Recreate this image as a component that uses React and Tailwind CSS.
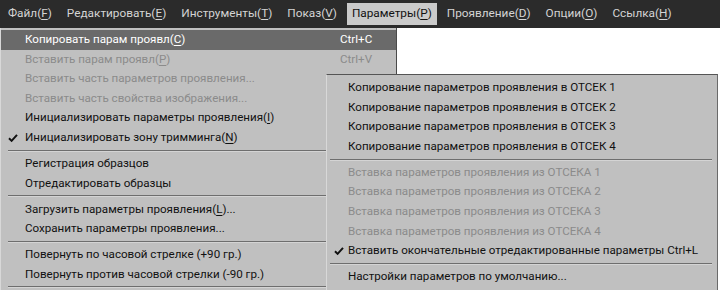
import React from 'react';

const font = { fontFamily: 'Roboto, "Noto Sans", sans-serif' };

function Mn({ children }) {
  return <span className="underline underline-offset-2">{children}</span>;
}

const topItems = [
  ['Файл(', 'F', ')'],
  ['Редактировать(', 'E', ')'],
  ['Инструменты(', 'T', ')'],
  ['Показ(', 'V', ')'],
  ['Параметры(', 'P', ')'],
  ['Проявление(', 'D', ')'],
  ['Опции(', 'O', ')'],
  ['Ссылка(', 'H', ')'],
];

function Check() {
  return (
    <svg width="10" height="9" viewBox="0 0 10 9" className="absolute left-[7px] top-1/2 -translate-y-1/2">
      <path d="M1 4.8 L3.6 7.4 L9 1.4" stroke="#111" strokeWidth="2" fill="none" />
    </svg>
  );
}

function Row({ children, shortcut, disabled, active, checked, pl = 'pl-[24px]' }) {
  let cls = 'text-[#111]';
  if (disabled) cls = 'text-[#8b8b8b]';
  if (active) cls = 'text-white bg-[#6a6a6a]';
  return (
    <div className={`relative flex items-center h-[19.6px] ${pl} pr-[20px] text-[11.6px] ${cls}`}>
      {checked && <Check />}
      <span className="flex-1 whitespace-nowrap">{children}</span>
      {shortcut && <span className="w-[36px] whitespace-nowrap">{shortcut}</span>}
    </div>
  );
}

function Sep({ w = 'w-[318px]', ml = 'ml-[7px]' }) {
  return (
    <div className="h-[6.4px] flex items-center">
      <div className={`${ml} ${w} h-[2px] border-t border-[#6e6e6e] border-b border-b-[#d4d4d4]`} />
    </div>
  );
}

export default function App() {
  return (
    <div className="w-[720px] h-[290px] bg-white overflow-hidden" style={font}>
      {/* menubar */}
      <div className="h-[28px] bg-[#2b2b2b] flex items-center pl-[3px] gap-[5px] text-[11.8px] text-[#d4d4d4]">
        {topItems.map(([a, m, b]) => {
          const sel = a === 'Параметры(';
          return (
            <div
              key={a}
              className={`h-[22px] flex items-center px-[5px] whitespace-nowrap ${sel ? 'bg-[#cacaca] text-[#111]' : ''}`}
            >
              {a}<Mn>{m}</Mn>{b}
            </div>
          );
        })}
      </div>

      <div className="relative">
        {/* main dropdown */}
        <div className="w-[397px] h-[262px] bg-[#c0c0c0] border-l border-l-[#d8d8d8] border-r border-r-[#4a4a4a] pt-[2px]">
          <Row active shortcut="Ctrl+C">Копировать парам проявл(<Mn>C</Mn>)</Row>
          <Row disabled shortcut="Ctrl+V">Вставить парам проявл(<Mn>P</Mn>)</Row>
          <Row disabled>Вставить часть параметров проявления...</Row>
          <Row disabled>Вставить часть свойства изображения...</Row>
          <Row>Инициализировать параметры проявления(<Mn>I</Mn>)</Row>
          <Row checked>Инициализировать зону тримминга(<Mn>N</Mn>)</Row>
          <Sep />
          <Row>Регистрация образцов</Row>
          <Row>Отредактировать образцы</Row>
          <Sep />
          <Row>Загрузить параметры проявления(<Mn>L</Mn>)...</Row>
          <Row>Сохранить параметры проявления...</Row>
          <Sep />
          <Row>Повернуть по часовой стрелке (+90 гр.)</Row>
          <Row>Повернуть против часовой стрелки (-90 гр.)</Row>
          <Sep />
        </div>

        {/* submenu */}
        <div className="absolute left-[326px] top-[46px] w-[392px] h-[230px] bg-[#c0c0c0] border-l border-l-[#d8d8d8] border-t border-t-[#555555] border-r border-r-[#6a6a6a] pt-[3px]">
          <Row pl="pl-[21px]">Копирование параметров проявления в ОТСЕК 1</Row>
          <Row pl="pl-[21px]">Копирование параметров проявления в ОТСЕК 2</Row>
          <Row pl="pl-[21px]">Копирование параметров проявления в ОТСЕК 3</Row>
          <Row pl="pl-[21px]">Копирование параметров проявления в ОТСЕК 4</Row>
          <Sep w="w-[382px]" ml="ml-[3px]" />
          <Row pl="pl-[21px]" disabled>Вставка параметров проявления из ОТСЕКА 1</Row>
          <Row pl="pl-[21px]" disabled>Вставка параметров проявления из ОТСЕКА 2</Row>
          <Row pl="pl-[21px]" disabled>Вставка параметров проявления из ОТСЕКА 3</Row>
          <Row pl="pl-[21px]" disabled>Вставка параметров проявления из ОТСЕКА 4</Row>
          <Row pl="pl-[21px]" checked>Вставить окончательные отредактированные параметры Ctrl+L</Row>
          <Sep w="w-[382px]" ml="ml-[3px]" />
          <Row pl="pl-[21px]">Настройки параметров по умолчанию...</Row>
        </div>
      </div>
    </div>
  );
}
